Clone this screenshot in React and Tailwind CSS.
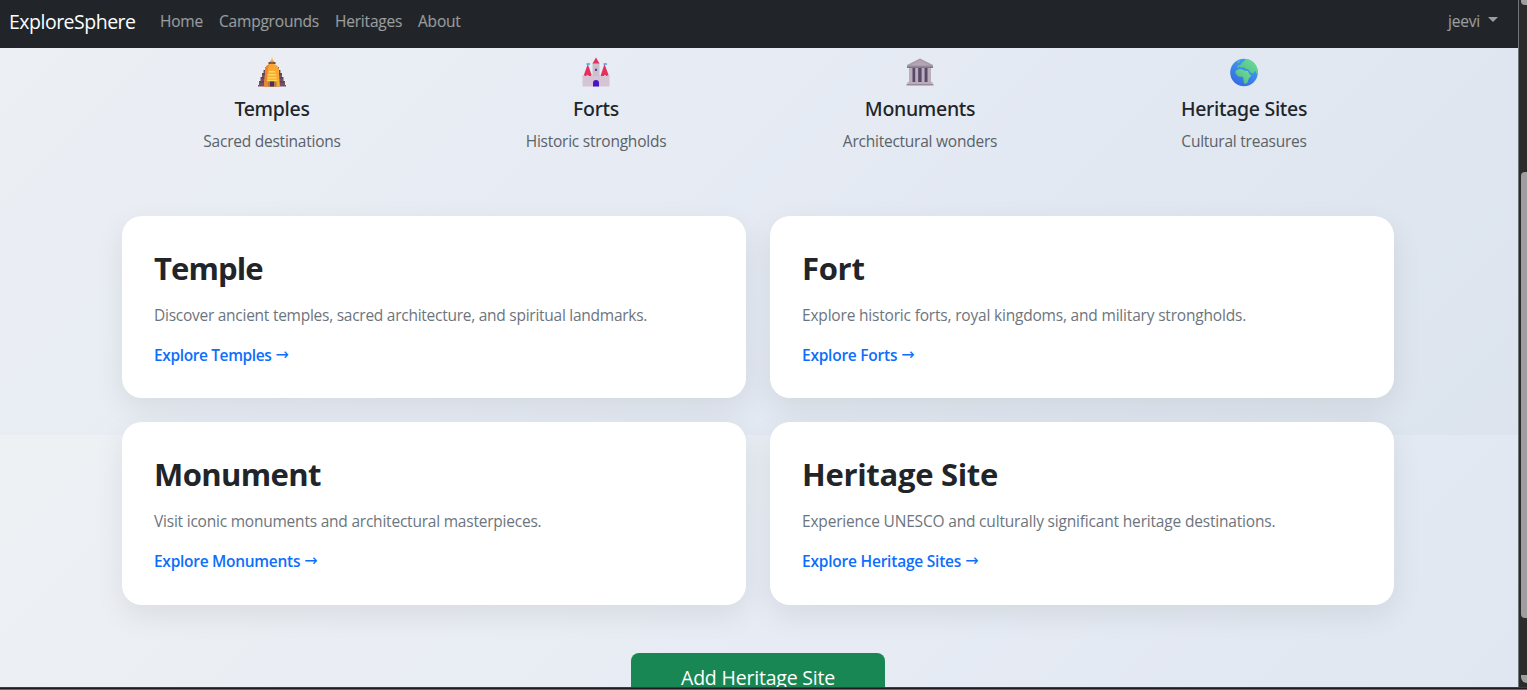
import React from 'react';

const TempleIcon = () => (
    <svg viewBox="0 0 28 30" className="w-7 h-[30px]">
        <path d="M7 10h14v3h1.500v3H24v4h1.500v4H27v4h1v1.500H0V28h1v-4h1.500v-4H4v-4h1.500v-3H7z" fill="#75505f" />
        <path d="M6 13.500h16M4.500 17h19M3 21h22M2 25h24" stroke="#4f3850" strokeWidth="1" />
        <path d="M14 0l1.500 5h-3z" fill="#f6c23e" />
        <path d="M10.500 5h7v2h-7z" fill="#6d4658" />
        <path d="M12 3.800h4v1.500h-4z" fill="#e99a35" />
        <path d="M7 13c0-8.500 14-8.500 14 0v4l1 12.500H6L7 17z" fill="#f9a836" />
        <path d="M7 13c0-3.500 2.500-5.500 5-6C9.500 10 9.500 16 9 29.500H6L7 17z" fill="#ed8434" />
        <path d="M11 14h6v1.400h-6zM10 17h8v1.400h-8zM9.500 20h9v1.400h-9zM9 22.800h10v1.200H9z" fill="#ffdc4f" />
        <path d="M9.500 24.500h9v5h-9z" fill="#b9783f" />
        <path d="M12 24.500h4v5h-4z" fill="#49305f" />
    </svg>
);

const FortIcon = () => (
    <svg viewBox="0 0 28 30" className="w-7 h-[30px]">
        <path d="M4.500 6H8v2H4.500zM21.500 6H25v2h-3.500z" fill="#58bde8" />
        <path d="M10.500 6h7v15h-7z" fill="#cdbfc9" />
        <path d="M14 .5l3.500 6h-7z" fill="#e5305e" />
        <path d="M5.800 7l4.200 12H1.500zM22.500 7L27 19h-8.500z" fill="#e5305e" />
        <path d="M.5 18h2v1h2v-1h2v1h2.500v-1h2v1h6v-1h2v1H22v-1h2v1h1.500v-1h2v11.500H.5z" fill="#d5c4d3" />
        <path d="M12.900 14v-1.300a1.100 1.100 0 0 1 2.200 0V14z" fill="#5843b5" />
        <path d="M11 29.500V26a3 3 0 0 1 6 0v3.500z" fill="#4a14c4" />
    </svg>
);

const MonumentIcon = () => (
    <svg viewBox="0 0 28 30" className="w-7 h-[30px]">
        <path d="M3 11h22v14H3z" fill="#594867" />
        <path d="M3 11h3.500v14H3zM9.200 11h3v14h-3zM15.600 11h3v14h-3zM21.500 11H25v14h-3.500z" fill="#b9aebd" />
        <path d="M14 1.500l13 6.500v2H1V8z" fill="#a89bab" />
        <path d="M14 3.500L23 8H5z" fill="#b3a7b7" />
        <path d="M1 9.500h26V11H1z" fill="#83758a" />
        <path d="M1.500 25h25v2h-25z" fill="#b9adbc" />
        <path d="M.5 27h27v1.500H.5z" fill="#998b9d" />
    </svg>
);

const GlobeIcon = () => (
    <svg viewBox="0 0 28 30" className="w-7 h-[30px]">
        <defs>
            <linearGradient id="sea" x1="0.8" y1="0" x2="0.2" y2="1">
                <stop offset="0" stopColor="#41a7ee" />
                <stop offset="1" stopColor="#3568e2" />
            </linearGradient>
            <linearGradient id="land" x1="1" y1="0" x2="0" y2="1">
                <stop offset="0" stopColor="#6be892" />
                <stop offset="1" stopColor="#55ad8c" />
            </linearGradient>
            <clipPath id="globe"><circle cx="14" cy="15.500" r="13.800" /></clipPath>
        </defs>
        <circle cx="14" cy="15.500" r="13.800" fill="url(#sea)" />
        <g clipPath="url(#globe)" fill="url(#land)">
            <path d="M7 10.500l1-2 3-1 1-2 2-1 2-3h6l5 5 2 8-1 4-1.500-2-1.500-3-2 3-2.500-1-2-3-3.500-1-1.500-1.500-2 1-2-1.500-1 1.500z" />
            <path d="M5.500 14l3.500-2 3 .3 2 1.200 4 .5 1.500 3.500 2 .5-3 4-1 3.500-2 1.500-1.500-1-1-6-4.500-.5-3-3z" />
            <path d="M7 5.500l2.500-2L9 6z" />
        </g>
    </svg>
);

const navLinks = [
    { label: 'Home', style: 'w-[43px]' },
    { label: 'Campgrounds', style: 'w-[100px]' },
    { label: 'Heritages', style: 'w-[67px]' },
    { label: 'About', style: 'w-[44px]' },
];

const features = [
    { icon: <TempleIcon />, title: 'Temples', text: 'Sacred destinations' },
    { icon: <FortIcon />, title: 'Forts', text: 'Historic strongholds' },
    { icon: <MonumentIcon />, title: 'Monuments', text: 'Architectural wonders' },
    { icon: <GlobeIcon />, title: 'Heritage Sites', text: 'Cultural treasures' },
];

const categories = [
    {
        title: 'Temple',
        titleStyle: 'tracking-[-0.9px]',
        text: 'Discover ancient temples, sacred architecture, and spiritual landmarks.',
        textStyle: 'tracking-[-0.26px]',
        link: 'Explore Temples',
        linkStyle: 'tracking-[-0.38px]',
    },
    {
        title: 'Fort',
        titleStyle: 'tracking-[-0.3px]',
        text: 'Explore historic forts, royal kingdoms, and military strongholds.',
        textStyle: 'tracking-[-0.19px]',
        link: 'Explore Forts',
        linkStyle: 'tracking-[-0.24px]',
    },
    {
        title: 'Monument',
        titleStyle: 'tracking-[-0.6px]',
        text: 'Visit iconic monuments and architectural masterpieces.',
        textStyle: 'tracking-[-0.22px]',
        link: 'Explore Monuments',
        linkStyle: 'tracking-[-0.28px]',
    },
    {
        title: 'Heritage Site',
        titleStyle: 'tracking-[-0.3px]',
        text: 'Experience UNESCO and culturally significant heritage destinations.',
        textStyle: 'tracking-[-0.18px]',
        link: 'Explore Heritage Sites',
        linkStyle: 'tracking-[-0.22px]',
    },
];

const Navbar = () => (
    <nav className="h-12 shrink-0 bg-[#212529] flex items-center pl-[9px] pr-5 pb-[5px] whitespace-nowrap">
        <a href="#" className="w-[127px] mr-6 text-[19.5px] tracking-[-0.5px] text-white">ExploreSphere</a>
        <div className="flex gap-4 text-[15.5px] tracking-[-0.2px] text-white/55">
            {navLinks.map((item) => (
                <a key={item.label} href="#" className={item.style}>{item.label}</a>
            ))}
        </div>
        <a href="#" className="ml-auto flex items-center gap-2 text-[15.5px] tracking-[-0.2px] text-white/55">
            jeevi
            <span className="mb-1 border-x-[5px] border-x-transparent border-t-[5px] border-t-white/55" />
        </a>
    </nav>
);

const CategoryCard = ({ item }) => (
    <div className="h-[182.4px] rounded-[20px] bg-white px-8 pt-[33px] shadow-[0_10px_30px_rgba(0,0,0,0.08)] whitespace-nowrap">
        <h2 className={`mb-[15.6px] text-[31px] leading-[38.4px] font-bold text-[#212529] ${item.titleStyle}`}>{item.title}</h2>
        <p className={`mb-4 text-[15.5px] leading-6 text-[#6c757d] ${item.textStyle}`}>{item.text}</p>
        <a href="#" className={`flex gap-1 text-[15.5px] leading-6 font-semibold text-[#0d6efd] ${item.linkStyle}`}>
            {item.link}
            <span className="font-['DejaVu_Sans',sans-serif] text-[16px] font-normal">→</span>
        </a>
    </div>
);

const App = () => (
    <div className="h-[690px] flex flex-col overflow-hidden bg-[#242228] font-['Open_Sans',sans-serif]">
        <div className="h-[687px] flex">
            <div className="w-[1518px] flex flex-col overflow-hidden bg-[linear-gradient(135deg,#eef1f4,#e6ebf4,#dce4ee)] bg-[length:1518px_690px] bg-[position:0_435px]">
                <Navbar />
                <main className="w-[1296px] ml-[110px]">
                    <div className="grid grid-cols-4 pt-[9px] text-center">
                        {features.map((item) => (
                            <div key={item.title} className="flex flex-col items-center">
                                {item.icon}
                                <h5 className="mt-[10px] mb-2 text-[19.5px] leading-6 tracking-[-0.3px] font-medium text-[#212529] font-['Noto_Sans',sans-serif]">{item.title}</h5>
                                <p className="text-[15.5px] leading-6 tracking-[-0.24px] text-[#5a6268]">{item.text}</p>
                            </div>
                        ))}
                    </div>
                    <div className="mt-[63px] px-3 grid grid-cols-2 gap-6">
                        {categories.map((item) => (
                            <CategoryCard key={item.title} item={item} />
                        ))}
                    </div>
                    <div className="mt-12 flex justify-center">
                        <button className="w-[254px] h-12 rounded-lg bg-[#198754] pt-px text-[19.5px] tracking-[-0.2px] text-white">Add Heritage Site</button>
                    </div>
                </main>
            </div>
            <div className="w-[9px] pl-[2px] flex flex-col bg-[#2b2b2b] border-l border-[#70757a]">
                <div className="h-[5px] shrink-0 bg-[#9f9d9f] rounded-bl-sm" />
                <div className="mt-[167px] h-[446px] shrink-0 bg-[#9f9d9f] rounded-l-[4px]" />
                <div className="mt-auto mb-1 h-2 shrink-0 bg-[#9f9d9f] rounded-bl-lg" />
            </div>
        </div>
        <div className="h-px bg-[#3c3c42]" />
        <div className="h-px bg-[#1e1c20]" />
        <div className="h-px bg-[#6b646c]" />
    </div>
);

export default App;
